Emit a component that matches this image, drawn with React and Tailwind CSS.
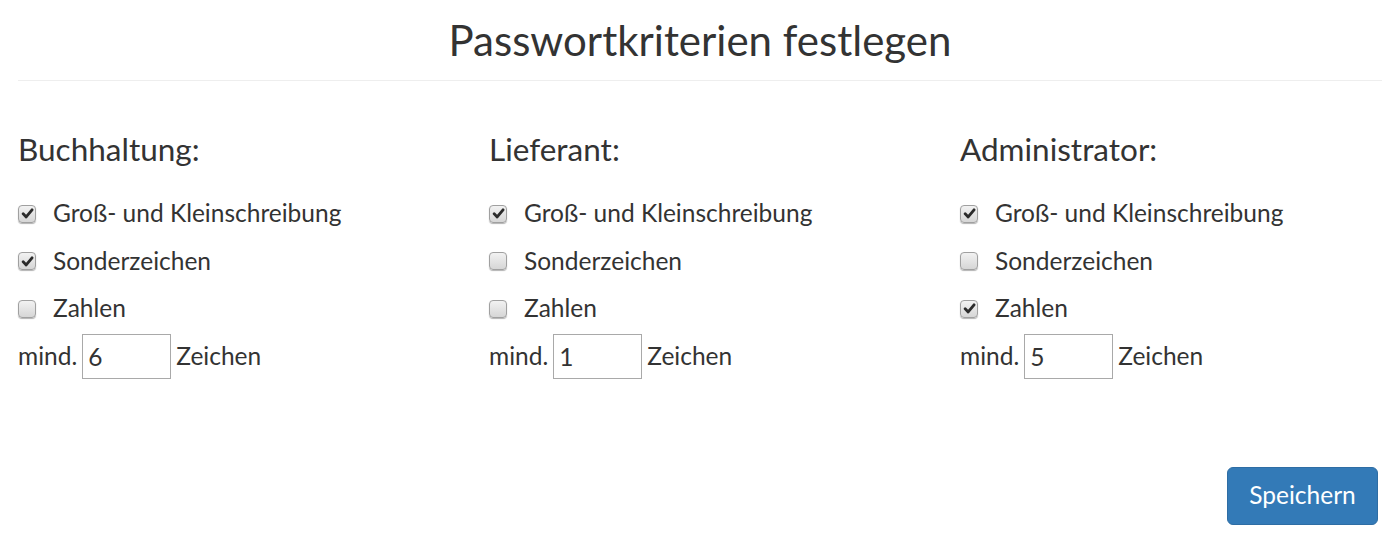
import React from "react";

const groups = [
  { title: "Buchhaltung:", checks: [true, true, false], min: "6" },
  { title: "Lieferant:", checks: [true, false, false], min: "1" },
  { title: "Administrator:", checks: [true, false, true], min: "5" },
];

const labels = ["Groß- und Kleinschreibung", "Sonderzeichen", "Zahlen"];

const Box = ({ checked }) => (
  <span className="w-[18px] h-[18px] rounded-[4px] border border-[#a0a0a0] bg-gradient-to-b from-[#f2f2f2] to-[#d6d6d6] shadow-[0_1px_1px_rgba(0,0,0,0.3)] flex items-center justify-center shrink-0">
    {checked && (
      <svg width="13" height="13" viewBox="0 0 12 12">
        <path d="M2 6.3 L4.8 9.2 L10.2 2.6" fill="none" stroke="#2b2b2b" strokeWidth="2.6" strokeLinecap="round" strokeLinejoin="round" />
      </svg>
    )}
  </span>
);

const App = () => {
  return (
    <div className="w-[1400px] h-[538px] bg-white text-[#333] px-[18px] font-['Lato',sans-serif]">
      {/* Title */}
      <h1 className="text-[42px] leading-[48px] text-center pt-[16px] pb-[16px] border-b border-[#eeeeee]">
        Passwortkriterien festlegen
      </h1>

      {/* Columns */}
      <div className="grid grid-cols-[471px_471px_1fr] pt-[45px]">
        {groups.map((g, i) => (
          <div key={i}>
            <h3 className="text-[31.5px] leading-[46px] mb-[18px]">{g.title}</h3>
            {labels.map((l, j) => (
              <div key={j} className="flex items-center h-[47.5px] text-[24.5px]">
                <Box checked={g.checks[j]} />
                <span className="ml-[17px]">{l}</span>
              </div>
            ))}
            <div className="flex items-center text-[24.5px] mt-[1px]">
              <span>mind.</span>
              <input
                readOnly
                value={g.min}
                className="w-[89px] h-[45px] border border-[#a9a9a9] mx-[5px] px-[5px] text-[24.5px] text-[#333] outline-none"
              />
              <span>Zeichen</span>
            </div>
          </div>
        ))}
      </div>

      {/* Save */}
      <div className="flex justify-end mt-[88px] mr-[4px]">
        <button
          type="button"
          className="w-[151px] h-[58px] bg-[#337ab7] border border-[#2e6da4] rounded-[6px] text-white text-[24.5px]"
        >
          Speichern
        </button>
      </div>
    </div>
  );
};

export default App;
